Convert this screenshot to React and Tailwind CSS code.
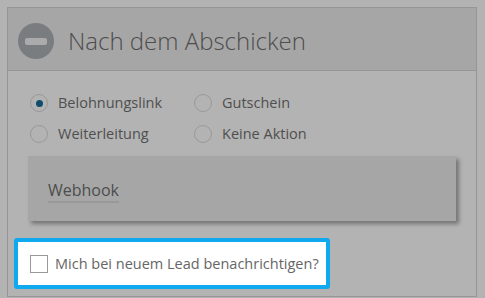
import React from "react";

function Radio({ checked, label }) {
  return (
    <div className="flex items-center gap-[10px]">
      <div className="w-[18px] h-[18px] rounded-full border border-[#999999] flex items-center justify-center">
        {checked && <div className="w-[7px] h-[7px] rounded-full bg-[#0f4c6e]" />}
      </div>
      <span className="text-[14.5px] text-[#4f4f4f] leading-none">{label}</span>
    </div>
  );
}

export default function App() {
  return (
    <div
      className="w-[485px] h-[298px] bg-[#b3b3b3] pt-[7px] pl-[7px] overflow-hidden"
      style={{ fontFamily: '"Open Sans", "Noto Sans", sans-serif' }}
    >
      <div className="w-[470px] h-[290px] border border-[#969696] flex flex-col">
        <div className="h-[63px] bg-[#a6a6a6] border-b border-[#969696] flex items-start pt-[15px] pl-[10px] gap-[14px] shrink-0">
          <div className="w-[36px] h-[36px] rounded-full bg-[#7a7d80] flex items-center justify-center">
            <div className="w-[22px] h-[7px] rounded-[2px] bg-[#ababab]" />
          </div>
          <span className="text-[24px] font-light leading-[36px] text-[#4d4d4d]">Nach dem Abschicken</span>
        </div>
        <div className="flex flex-col">
          <div className="grid grid-cols-[164px_auto] gap-y-[13px] pl-[22px] pt-[23px]">
            <Radio checked label="Belohnungslink" />
            <Radio label="Gutschein" />
            <Radio label="Weiterleitung" />
            <Radio label="Keine Aktion" />
          </div>
          <div className="ml-[20px] mt-[13px] w-[428px] h-[65px] bg-[#a6a6a6] shadow-[3px_3px_4px_rgba(0,0,0,0.35)] pl-[20px] pt-[22px]">
            <span className="inline-block text-[16px] leading-[22px] text-[#4d4d4d] border-b-2 border-[#999999]">Webhook</span>
          </div>
          <div className="ml-[6px] mt-[17px] w-[316px] h-[51px] bg-white border-4 border-[#0ea9ee] rounded-[3px] flex items-center pl-[12px] gap-[7px]">
            <div className="w-[18px] h-[18px] border border-[#999999]" />
            <span className="text-[14.5px] text-[#666666]">Mich bei neuem Lead benachrichtigen?</span>
          </div>
        </div>
      </div>
    </div>
  );
}
